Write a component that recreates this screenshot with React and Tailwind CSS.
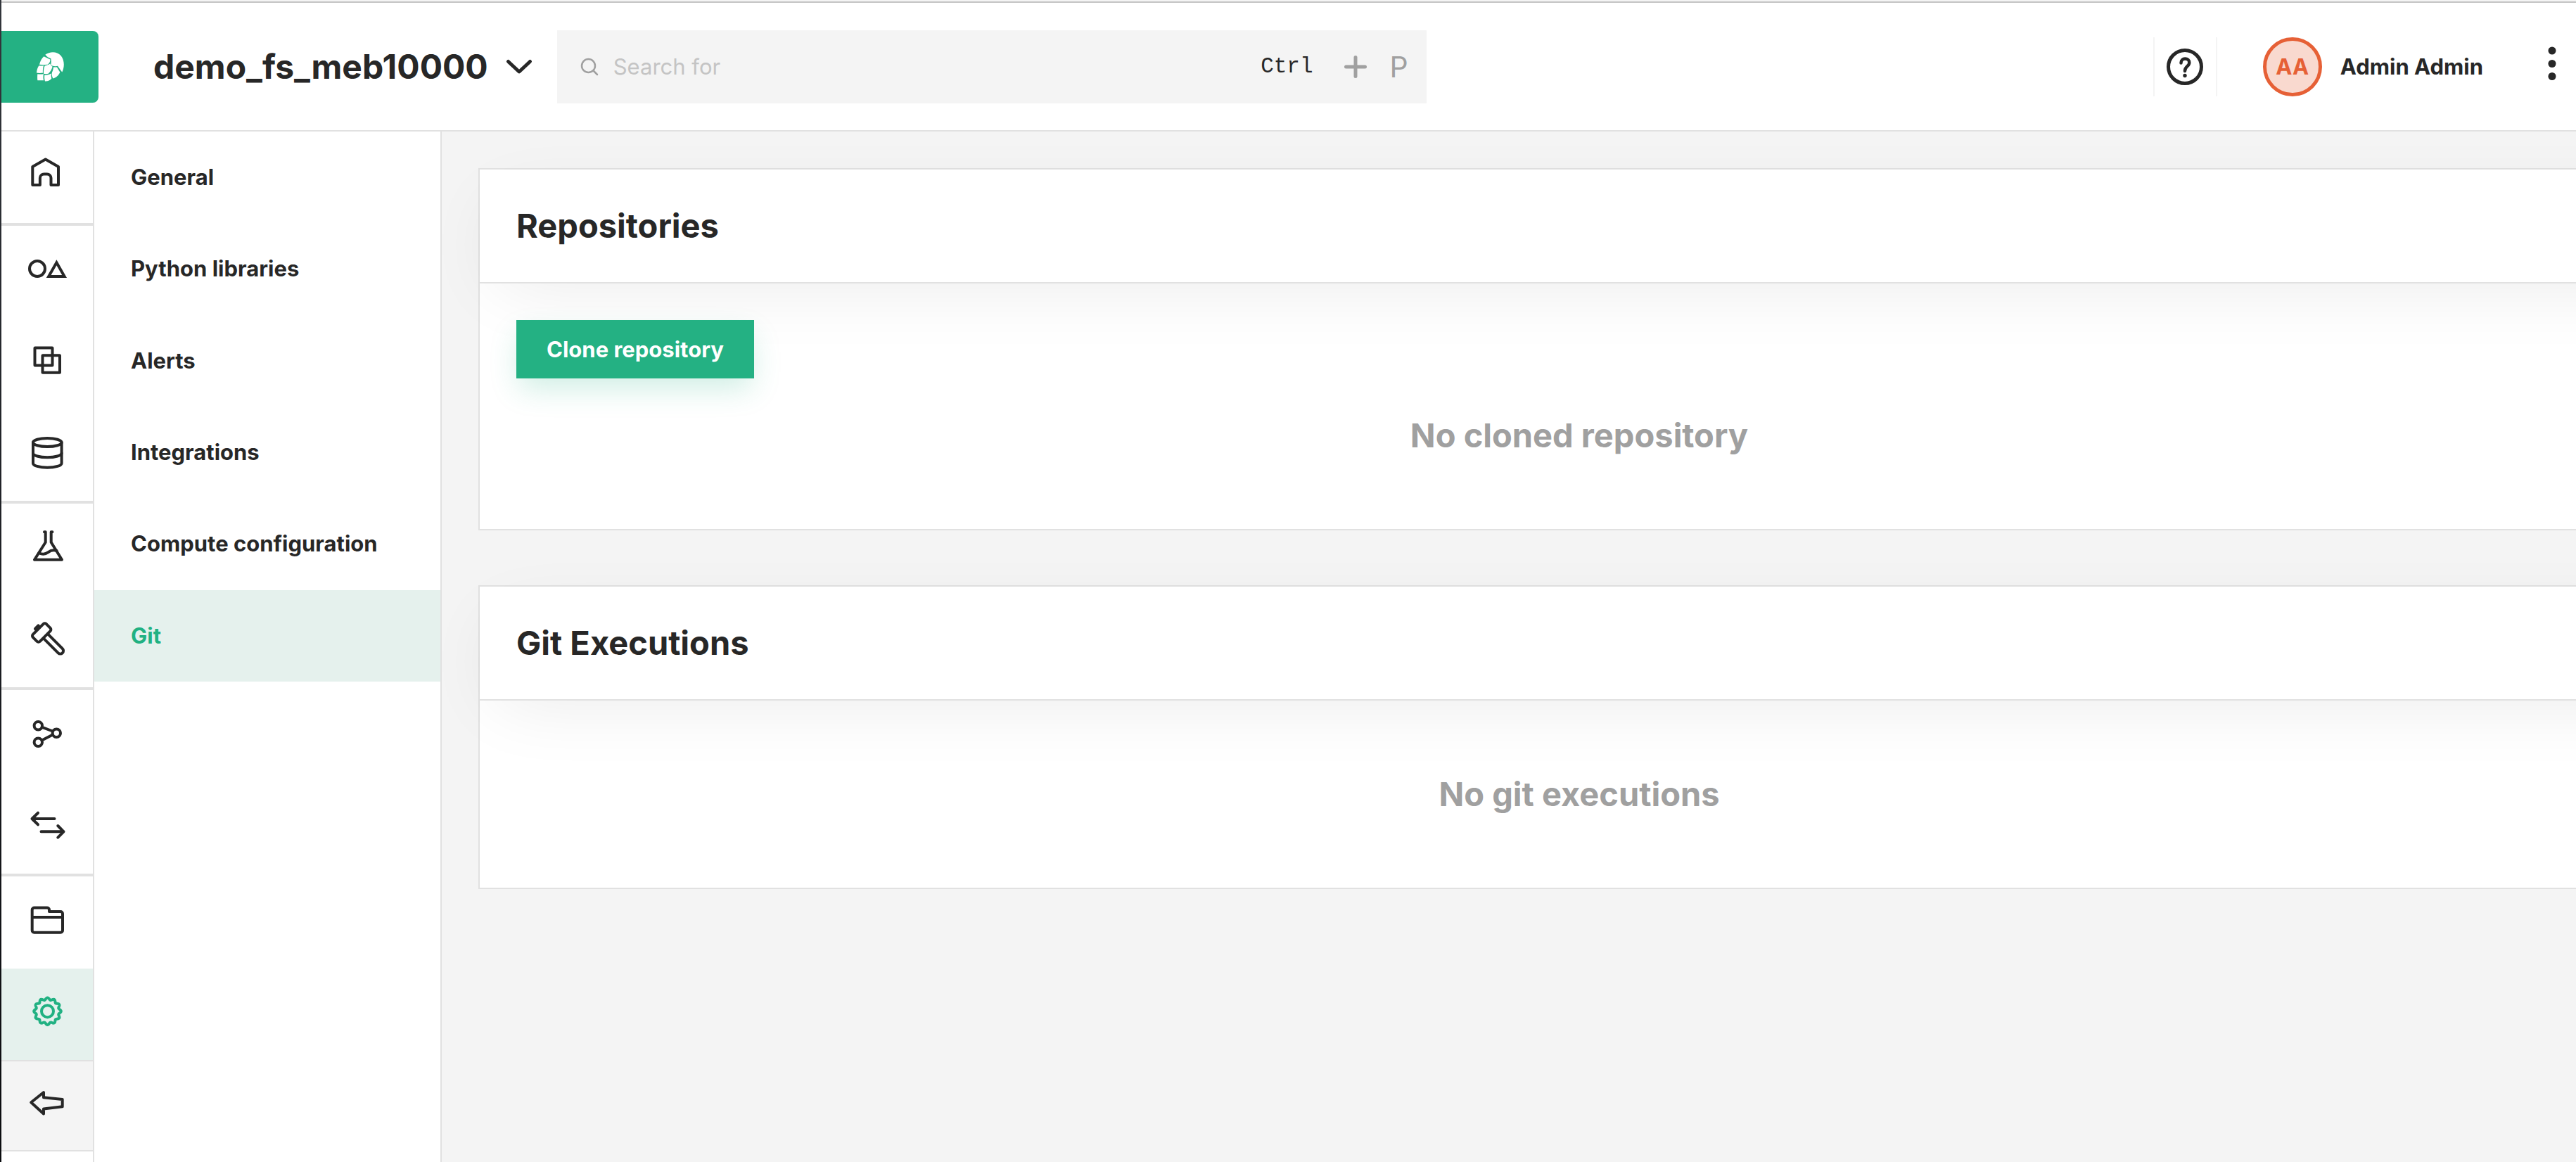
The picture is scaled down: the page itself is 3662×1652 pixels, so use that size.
import React from "react";

const ink = "#272727";

function Icon({ children, strokeWidth = 4 }) {
  return (
    <svg
      viewBox="0 0 64 64"
      className="size-16"
      fill="none"
      stroke="currentColor"
      strokeWidth={strokeWidth}
      strokeLinecap="round"
      strokeLinejoin="round"
      aria-hidden="true"
    >
      {children}
    </svg>
  );
}

const HomeIcon = () => (
  <Icon>
    <path d="M11.3 17 29.7 6.5 48 17V43H37.5V33a5.6 5.6 0 0 0-5.6-5.6h-4.4a5.6 5.6 0 0 0-5.6 5.6V43H11.3Z" />
  </Icon>
);

const ShapesIcon = () => (
  <Icon>
    <circle cx="18" cy="28" r="11" />
    <path strokeLinejoin="miter" d="M45.4 19.3 56.6 39H34.2Z" />
  </Icon>
);

const LayersIcon = () => (
  <Icon>
    <rect x="14.5" y="10.5" width="25" height="25" rx="0.5" />
    <rect x="25.5" y="21.3" width="24.5" height="24.5" rx="0.5" />
  </Icon>
);

const DatabaseIcon = () => (
  <Icon>
    <ellipse cx="32.3" cy="14" rx="20.3" ry="6" />
    <path d="M12 14V43.7c0 3.3 9 6 20.3 6s20.3-2.7 20.3-6V14" />
    <path d="M12 29.3c0 3.3 9 6 20.3 6s20.3-2.7 20.3-6" />
  </Icon>
);

const FlaskIcon = () => (
  <Icon>
    <path d="M28 7.3h1.7V22L14 46.7H53L37.7 22V7.3h1.7" />
    <path d="M20.5 37.2c5 2.4 9 2 13-1 4-3 7.5-3.7 12-2.2" />
  </Icon>
);

const HammerIcon = () => (
  <Icon>
    <g transform="translate(24.2 19.5) rotate(-45)">
      <rect x="-13.4" y="-7" width="26.8" height="14" rx="3" />
    </g>
    <path d="M27.7 28.3 47.7 48.3a4.3 4.3 0 0 0 6.1-6.1L34.3 22.7" />
    <path strokeWidth="5" d="M15.5 14 19.5 10" />
  </Icon>
);

const NodesIcon = () => (
  <Icon>
    <circle cx="19.3" cy="17.7" r="5.7" />
    <circle cx="19.3" cy="41.3" r="5.7" />
    <circle cx="45.3" cy="28.3" r="5.7" />
    <path d="M24.8 19.8 39.8 25.5M24.5 38.5 40 30.5" />
  </Icon>
);

const TransferIcon = () => (
  <Icon>
    <path d="M42.5 19H10.5M19 10.7 10.5 19 19 27.3" />
    <path d="M23.5 37.3H55.5M47.3 29 55.5 37.3 47.3 45.6" />
  </Icon>
);

const FolderIcon = () => (
  <Icon>
    <path d="M10.7 14.5a3 3 0 0 1 3-3H32a3 3 0 0 1 3 3V17H51a3 3 0 0 1 3 3V43.7a3 3 0 0 1-3 3H13.7a3 3 0 0 1-3-3ZM10.7 25H54" />
  </Icon>
);

const gearPath =
  Array.from({ length: 144 }, (_, i) => {
    const angle = (i / 144) * Math.PI * 2;
    const radius = 17.8 + 1.5 * Math.cos(angle * 12);
    const x = (32.5 + radius * Math.sin(angle)).toFixed(2);
    const y = (27.7 - radius * Math.cos(angle)).toFixed(2);
    return `${i === 0 ? "M" : "L"}${x} ${y}`;
  }).join("") + "Z";

const GearIcon = () => (
  <Icon>
    <path d={gearPath} />
    <circle cx="32.5" cy="27.7" r="8.5" />
  </Icon>
);

const BackIcon = () => (
  <Icon>
    <path d="M9.2 27.3 27 13V20.2L53.7 23V33.2L27 36.6V43.5Z" />
  </Icon>
);

const LogoIcon = () => (
  <svg viewBox="153 137 117 125" className="h-[42px] w-[39px]" fill="white" aria-hidden="true">
    <path d="M190 148C210 133 240 133 257 152C272 170 273 200 262 222C256 216 250 206 243 196C232 198 222 197 214 192C216 180 215 170 214 164C205 162 196 156 190 148Z" />
    <path d="M184 155C192 158 202 164 211 168C212 176 208 184 200 190C188 192 176 192 165 190C168 176 175 163 184 155Z" />
    <path d="M163 194C170 195 177 195 183 194C180 204 179 216 180 225C172 227 160 227 153 225C154 213 157 202 163 194Z" />
    <path d="M188 195C197 193 205 190 211 186C213 192 216 196 221 199C217 212 211 222 203 229C196 231 189 231 183 229C182 217 184 205 188 195Z" />
    <path d="M225 201H240C244 208 249 216 253 223C247 236 237 246 223 249C218 240 217 230 219 223C223 216 224 208 225 201Z" />
    <path d="M157 230C165 232 175 231 183 230C181 238 181 248 183 257H157C156 248 156 238 157 230Z" />
    <path d="M187 235C197 235 207 233 216 228C214 235 215 242 217 249C211 257 200 262 189 261C186 252 186 243 187 235Z" />
  </svg>
);

const railGroups = [
  { height: "h-[134px]", items: [["Home", HomeIcon]] },
  { height: "h-[395px]", items: [["Feature groups", ShapesIcon], ["Feature views", LayersIcon], ["Storage", DatabaseIcon]] },
  { height: "h-[265px]", items: [["Experiments", FlaskIcon], ["Jobs", HammerIcon]] },
  { height: "h-[265px]", items: [["Models", NodesIcon], ["Deployments", TransferIcon]] },
];

function RailButton({ label, children, className = "" }) {
  return (
    <button type="button" aria-label={label} className={`flex w-full flex-1 items-center justify-center ${className}`}>
      {children}
    </button>
  );
}

function Rail() {
  return (
    <nav aria-label="Project" className="flex w-[132px] shrink-0 flex-col border-r-2 border-[#e1e1e1] bg-white">
      {railGroups.map((group) => (
        <div key={group.items[0][0]} className={`flex shrink-0 flex-col border-b-4 border-[#e1e1e1] ${group.height}`}>
          {group.items.map(([label, Glyph]) => (
            <RailButton key={label} label={label}>
              <Glyph />
            </RailButton>
          ))}
        </div>
      ))}
      <div className="flex h-[263px] shrink-0 flex-col border-b-2 border-[#e1e1e1]">
        <RailButton label="Files">
          <FolderIcon />
        </RailButton>
        <RailButton label="Settings" className="bg-[#e5f1ed] text-[#21b182]">
          <GearIcon />
        </RailButton>
      </div>
      <div className="flex h-32 shrink-0 flex-col border-b-2 border-[#e1e1e1]">
        <RailButton label="Collapse" className="bg-[#f4f4f4]">
          <BackIcon />
        </RailButton>
      </div>
    </nav>
  );
}

const menu = ["General", "Python libraries", "Alerts", "Integrations", "Compute configuration", "Git"];

function SettingsMenu() {
  return (
    <nav aria-label="Settings" className="w-[494px] shrink-0 border-r-2 border-[#e1e1e1] bg-white">
      <div className="flex h-[782px] flex-col">
        {menu.map((item) => (
          <a
            key={item}
            href="#"
            className={`flex flex-1 items-center px-[52px] text-[31px] leading-10 font-bold ${
              item === "Git" ? "bg-[#e5f1ed] text-[#21b182]" : ""
            }`}
          >
            {item}
          </a>
        ))}
      </div>
    </nav>
  );
}

function Card({ title, children }) {
  return (
    <section className="border-2 border-[#e1e1e1] bg-white">
      <div className="flex h-[162px] items-center border-b-2 border-[#e1e1e1] bg-white px-[52px] shadow-[0_26px_104px_-26px_rgba(0,0,0,0.09)]">
        <h2 className="text-[47px] leading-14 font-bold">{title}</h2>
      </div>
      {children}
    </section>
  );
}

function Header() {
  return (
    <header className="flex h-[183px] shrink-0 items-center border-b-2 border-[#e1e1e1] bg-white">
      <a href="#" aria-label="Hopsworks" className="flex h-[102px] w-[138px] shrink-0 items-center justify-center rounded-r-lg bg-[#24b183]">
        <LogoIcon />
      </a>
      <button type="button" className="ml-[78px] flex shrink-0 items-center gap-[24px] text-[48px] leading-14 font-bold">
        demo_fs_meb10000
        <svg viewBox="0 0 40 24" className="h-6 w-10" fill="none" stroke={ink} strokeWidth="5" strokeLinecap="round" strokeLinejoin="round" aria-hidden="true">
          <path d="M4.5 4.5 20 19 35.5 4.5" />
        </svg>
      </button>
      <label className="ml-[34px] flex h-[104px] w-[1236px] items-center bg-[#f4f4f4] px-[26px] text-[#a0a0a0]">
        <svg viewBox="0 0 36 36" className="mr-[18px] size-9 shrink-0" fill="none" stroke="currentColor" strokeWidth="2.5" strokeLinecap="round" aria-hidden="true">
          <circle cx="18.5" cy="16.5" r="9.5" />
          <path d="M25.5 23.5 31 29" />
        </svg>
        <input
          type="text"
          aria-label="Search"
          placeholder="Search for"
          className="min-w-0 flex-1 bg-transparent text-[31px] leading-10 outline-none placeholder:text-[#c4c4c4]"
        />
        <span className="font-['Liberation_Mono',monospace] text-[31px] leading-10 text-[#272727]">Ctrl</span>
        <svg viewBox="0 0 36 36" className="ml-[42px] size-9" fill="none" stroke="currentColor" strokeWidth="5" strokeLinecap="round" aria-hidden="true">
          <path d="M18 4.5V31.5M4.5 18H31.5" />
        </svg>
        <span className="ml-[31px] text-[41px] leading-12">P</span>
      </label>
      <div className="ml-auto flex shrink-0 items-center">
        <button type="button" aria-label="Help" className="flex h-[84px] w-[91px] items-center justify-center border-x-2 border-[#f4f4f4]">
          <svg viewBox="0 0 54 54" className="size-[54px]" fill="none" stroke={ink} strokeWidth="5" aria-hidden="true">
            <circle cx="27" cy="27" r="23.5" />
            <path strokeWidth="4.5" strokeLinecap="round" d="M21.5 21.5c0-4 2.500-6 5.800-6s6 2.200 6 5.500c0 5.500-6.300 5-6.300 12" />
            <circle cx="27" cy="39.5" r="2.7" fill={ink} stroke="none" />
          </svg>
        </button>
        <button type="button" className="ml-[65px] flex items-center gap-[26px] text-[31px] leading-10 font-bold">
          <span className="flex size-[84px] items-center justify-center rounded-full border-[5px] border-[#e66036] bg-[#f9d9cf] text-[#e66036]">
            AA
          </span>
          Admin Admin
        </button>
        <button type="button" aria-label="More" className="mr-7 ml-[92px]">
          <svg viewBox="0 0 12 58" className="h-[58px] w-3" fill={ink} aria-hidden="true">
            <circle cx="6" cy="6" r="5.5" />
            <circle cx="6" cy="24.5" r="5.5" />
            <circle cx="6" cy="42.5" r="5.5" />
          </svg>
        </button>
      </div>
    </header>
  );
}

export default function App() {
  return (
    <div className="flex h-screen overflow-hidden bg-[#f4f4f4] font-[Inter,sans-serif] text-[#272727]">
      <div className="w-0.5 shrink-0 bg-linear-to-b from-[#33363c] to-[#0b0c0f]" />
      <div className="flex min-w-0 flex-1 flex-col">
        <div className="h-1 shrink-0 border-b-2 border-[#c4c4c4]" />
        <Header />
        <div className="flex min-h-0 flex-1">
          <Rail />
          <SettingsMenu />
          <main className="min-w-0 flex-1 overflow-hidden">
            <div className="flex w-[calc(100%+200px)] flex-col gap-[78px] p-[52px]">
              <Card title="Repositories">
                <div className="px-[52px] pt-[52px] pb-[105px]">
                  <button
                    type="button"
                    className="flex h-[83px] items-center bg-[#24b183] px-[43px] text-[31px] leading-10 font-bold text-white shadow-[0_18px_42px_-4px_rgba(36,177,131,0.22)]"
                  >
                    Clone repository
                  </button>
                  <p className="mt-[53px] text-center text-[47px] leading-14 font-bold text-[#a0a0a0]">No cloned repository</p>
                </div>
              </Card>
              <Card title="Git Executions">
                <p className="py-[105px] text-center text-[47px] leading-14 font-bold text-[#a0a0a0]">No git executions</p>
              </Card>
            </div>
          </main>
        </div>
      </div>
    </div>
  );
}
